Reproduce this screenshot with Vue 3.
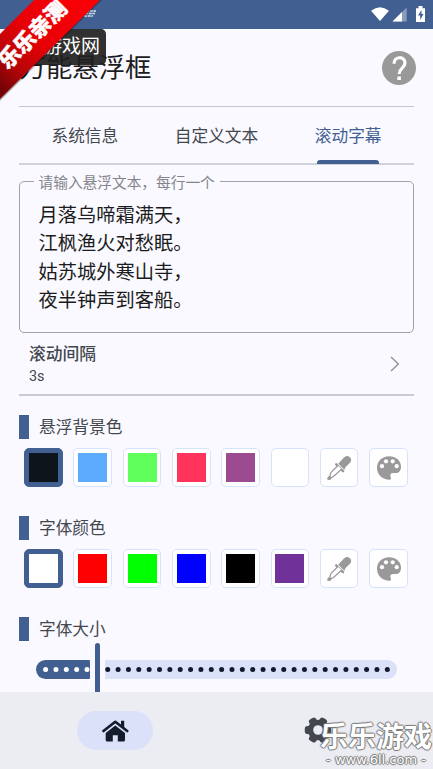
<script setup>
const tabs = ['系统信息', '自定义文本', '滚动字幕']
const lines = ['月落乌啼霜满天，', '江枫渔火对愁眠。', '姑苏城外寒山寺，', '夜半钟声到客船。']
const sections = [
  { title: '悬浮背景色', colors: ['#0d141c', '#5cabff', '#60ff5c', '#ff335c', '#9d4b90', '#ffffff'] },
  { title: '字体颜色', colors: ['#ffffff', '#ff0000', '#00ff00', '#0000ff', '#000000', '#703299'] },
]
const dots = Array.from({ length: 34 }, (_, i) => i).filter((i) => i !== 5)
</script>

<template>
  <div class="screen">
    <header class="status">
      <svg class="notice" width="14" height="8" viewBox="0 0 14 8"><path d="M3 1h10M2 3.5h10M1 6h9" stroke="#dce4f2" stroke-width="1.3" stroke-dasharray="3 .7" /></svg>
      <svg class="sys" width="58" height="18" viewBox="0 0 58 18" fill="#fff">
        <path d="M1 4.700Q10 -2.400 19 4.700L10 15Z" />
        <path d="M22.500 15.500 36.700 1.500V15.500Z" opacity=".38" />
        <path d="M22.500 15.500 32 6V15.500Z" />
        <path fill-rule="evenodd" d="M46 2.200h2.500V0h4v2.200H55V16h-9ZM51.500 4 48 9.500h2.200V14l3.300-6h-2Z" />
      </svg>
    </header>
    <div class="title-row">
      <h1>万能悬浮框</h1>
      <svg class="help" width="34" height="34" viewBox="0 0 34 34">
        <circle cx="17" cy="17" r="17" fill="#999" />
        <path d="M12 12.700C12 4.700 23 5 23 12c0 4.700-5.800 5.200-5.800 11" fill="none" stroke="#fff" stroke-width="3.200" />
        <path d="M15.400 25.500h3.500V29h-3.500Z" fill="#fff" />
      </svg>
    </div>
    <nav class="tabs">
      <div v-for="(t, i) in tabs" :key="t" class="tab" :class="{ active: i === 2 }">{{ t }}</div>
    </nav>
    <fieldset class="field">
      <legend>请输入悬浮文本，每行一个</legend>
      <p v-for="l in lines" :key="l">{{ l }}</p>
    </fieldset>
    <div class="interval">
      <div>
        <div class="name">滚动间隔</div>
        <div class="value">3s</div>
      </div>
      <svg width="10" height="16" viewBox="0 0 10 16"><path d="M1 1l7.300 7L1 15" fill="none" stroke="#929299" stroke-width="1.400" /></svg>
    </div>
    <section v-for="s in sections" :key="s.title" class="section">
      <h2>{{ s.title }}</h2>
      <div class="swatches">
        <div v-for="(c, i) in s.colors" :key="i" class="swatch" :class="{ selected: i === 0 }">
          <i :style="{ background: c }"></i>
        </div>
        <div class="swatch">
          <svg width="26" height="26" viewBox="0 0 26 26">
            <path d="M14.200 6.500 18.300 2.200Q21.200-.2 23.800 2.200T24 7.800L19.600 12Z" fill="#999" />
            <path d="m10.200 9.300 6.900 6.900" stroke="#999" stroke-width="2.400" stroke-linecap="round" />
            <path d="M12 10.500 5.300 17.200Q4 19.200 4 21.200L2.500 23.500Q5.300 22.800 7.500 21.500L15.700 14" fill="#fff" stroke="#999" stroke-width="1.200" />
            <path d="m12.200 8.500 6.200 6.200 1.500-3.500-5-5Z" fill="#999" />
            <circle cx="3.300" cy="23.200" r="1.900" fill="#999" />
          </svg>
        </div>
        <div class="swatch">
          <svg width="24" height="24" viewBox="0 0 24 24">
            <path d="M12 .2C5 .2 0 5.200 0 11.800S5.200 23.800 12.600 23.800C14.300 23.800 14.200 22 13.500 20.500 12.700 18.500 14 17 16.200 17H19.500C22.500 17 24 14 24 10.500 24 4.500 19 .2 12 .2Z" fill="#999" />
            <g fill="#fff"><circle cx="5" cy="10.200" r="2.100" /><circle cx="9" cy="5.300" r="2.100" /><circle cx="15.700" cy="5.300" r="2.100" /><circle cx="19.700" cy="10.200" r="2.100" /></g>
          </svg>
        </div>
      </div>
    </section>
    <section class="section size">
      <h2>字体大小</h2>
      <svg class="slider" width="395" height="49" viewBox="19 643 395 49">
        <path d="M45.500 660H89q1 0 1 1v17q0 1-1 1H45.500a9.500 9.500 0 0 1 0-19Z" fill="#416091" />
        <path d="M106 660H387.500a9.500 9.500 0 0 1 0 19H106q-1 0-1-1V661q0-1 1-1Z" fill="#dae1f9" />
        <circle v-for="d in dots" :key="d" :cx="45.600 + d * 10.355" cy="669.600" r="2.500" :fill="d < 5 ? '#fff' : '#101b2c'" />
        <rect x="95" y="643" width="5" height="55" rx="2.500" fill="#416091" />
      </svg>
    </section>
    <footer class="bottom">
      <div class="pill">
        <svg width="27" height="22" viewBox="0 0 27 22" fill="#131c2b">
          <path d="M1.500 11 13.300 1.800 25.200 11" fill="none" stroke="#131c2b" stroke-width="2.700" stroke-linecap="round" stroke-linejoin="round" />
          <path d="M19 .8h3.200v7L19 5.300ZM13.300 5.500 23 13v7q0 1.500-1.500 1.500h-5.700v-6.300h-5v6.300H5.200q-1.500 0-1.500-1.500v-7Z" />
        </svg>
      </div>
      <svg class="gear" width="28" height="28" viewBox="-14 -14 28 28">
        <g fill="#43474e"><circle r="10.300" /><rect v-for="n in 6" :key="n" x="-4" y="-13.200" width="8" height="8" rx="2.800" :transform="`rotate(${n * 60 + 30})`" /></g>
        <circle r="4.800" fill="#ecedf2" />
      </svg>
    </footer>

    <div class="site-tag">游戏网</div>
    <div class="ribbon">
      <svg width="104" height="104" viewBox="0 0 104 104">
        <defs>
          <linearGradient id="red" gradientUnits="userSpaceOnUse" x1="85" y1="0" x2="5" y2="90"><stop offset="0" stop-color="#fb0007" /><stop offset=".5" stop-color="#e60006" /><stop offset=".78" stop-color="#b90508" /><stop offset="1" stop-color="#780306" /></linearGradient>
        </defs>
        <path d="M0 101 102 0H90L0 90Z" fill="#000" opacity=".28" />
        <path d="M34 0H100L0 99V34Z" fill="url(#red)" />
      </svg>
      <span>乐乐亲测</span>
    </div>
    <div class="mark"><b>乐乐游戏</b><small>- www.6ll.com -</small></div>
  </div>
</template>

<style>
body { margin: 0; }
</style>

<style scoped>
.screen { position: relative; width: 433px; height: 769px; overflow: hidden; display: flex; flex-direction: column; background: #faf9ff; color: #43474e; font-family: Roboto, "Noto Sans CJK SC", sans-serif; }
.status { height: 29px; flex: none; background: #416091; display: flex; justify-content: space-between; }
.notice { margin: 10px 0 0 83px; }
.sys { margin: 6px 5px 0 0; }
.title-row { height: 77px; flex: none; margin: 0 17px 0 19.500px; display: flex; align-items: center; justify-content: space-between; }
h1 { margin: 0; font-size: 26.400px; font-weight: 400; color: #1a1c20; line-height: 38px; }
.tabs { height: 57px; flex: none; margin: 0 19px; display: grid; grid-template-columns: repeat(3, 1fr); border-top: 1px solid #c4c6cf; background: linear-gradient(#cfd1db, #cfd1db) 0 56px / 100% 2px no-repeat; padding-bottom: 1px; }
.tab { position: relative; text-align: center; font-size: 16.700px; line-height: 60px; height: 57px; }
.active { color: #416091; }
.active::after { content: ""; position: absolute; left: 35px; bottom: 0; width: 62px; height: 4px; border-radius: 3px 3px 0 0; background: #416091; }
.field { flex: none; box-sizing: border-box; height: 161px; margin: 7px 19px 0; padding: 10.500px 18.500px 0; border: 1px solid #a1a2a9; border-radius: 5px; min-width: 0; color: #1a1c20; }
legend { margin-left: -5px; padding: 0 5px; font-size: 14.700px; height: 19px; line-height: 22px; color: #83858b; }
.field p { margin: 0; font-size: 19.250px; line-height: 28.500px; white-space: nowrap; }
.interval { height: 63px; flex: none; box-sizing: border-box; margin: 0 19px -1px; padding: 9px 14px 0 10px; display: flex; justify-content: space-between; border-bottom: 2px solid #c9cad2; }
.interval svg { margin-top: 14px; }
.name { font-size: 16.800px; line-height: 25px; font-weight: 500; }
.value { font-size: 14.400px; line-height: 20px; }
.section { height: 101px; flex: none; margin: 0 19px; box-sizing: border-box; padding-top: 20px; }
.section h2 { margin: 0; height: 24px; border-left: 10px solid #416091; padding-left: 10px; font-size: 16.700px; line-height: 26px; font-weight: 400; }
.swatches { margin: 9px 0 0 5.200px; display: grid; grid-template-columns: repeat(8, 38.500px); column-gap: 10.800px; }
.swatch { height: 39px; box-sizing: border-box; border: 1px solid #d7e2fc; border-radius: 5px; background: #fff; display: flex; align-items: center; justify-content: center; }
.swatch i { width: 29px; height: 29px; }
.selected { background: #416091; border-color: #416091; }
.size { height: 95px; }
.slider { display: block; margin-top: 2px; }
.bottom { flex: 1; background: #ecedf2; display: grid; grid-template-columns: 230px 1fr; align-items: start; }
.pill { margin: 19px 0 0 77px; width: 76px; height: 39px; border-radius: 20px; background: #dae1f9; display: flex; align-items: center; justify-content: center; }
.gear { margin: 24px 0 0 74px; }
.site-tag { position: absolute; left: 20px; top: 29px; width: 86px; height: 36px; box-sizing: border-box; padding-right: 6px; border-radius: 5px; background: rgba(32, 32, 32, .92); color: #fff; font-size: 19px; line-height: 36px; text-align: right; }
.ribbon { position: absolute; left: 0; top: 0; width: 104px; height: 104px; }
.ribbon svg { display: block; }
.ribbon span { position: absolute; left: -19px; top: 20px; width: 104px; text-align: center; font-size: 21.500px; line-height: 30px; font-weight: 900; color: #fff; -webkit-text-stroke: .5px #fff; transform: rotate(-45deg); white-space: nowrap; }
.mark { position: absolute; left: 319px; top: 719px; width: 114px; text-align: center; color: #fff; white-space: nowrap; text-shadow: 1px 0 1px #777, -1px 0 1px #777, 0 1px 1px #777, 0 -1px 1px #777; }
.mark b { display: block; font-size: 28px; line-height: 38px; font-weight: 700; }
.mark small { display: block; margin-top: -5px; font-size: 13px; line-height: 15px; font-family: "DejaVu Sans", sans-serif; }
</style>
